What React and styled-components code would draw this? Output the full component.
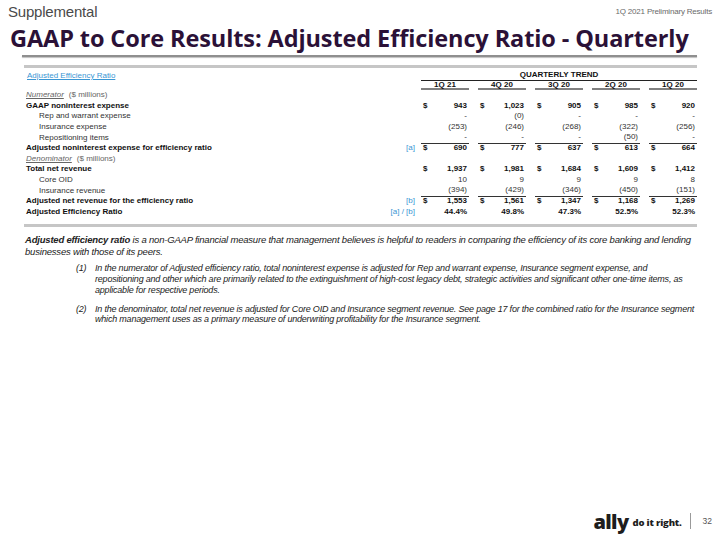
import React from 'react';
import styled, { createGlobalStyle } from 'styled-components';

const GlobalStyle = createGlobalStyle`
  html, body {
    margin: 0;
    padding: 0;
    background: #fff;
  }
  body {
    font-family: "Liberation Sans", Arial, sans-serif;
    color: #1a1a1a;
  }
`;

const Page = styled.div`
  width: 720px;
  height: 540px;
  display: flex;
  flex-direction: column;
  overflow: hidden;
`;

const TopBar = styled.div`
  height: 22px;
  padding: 0 8px;
  display: flex;
  align-items: center;
  justify-content: space-between;
`;

const Section = styled.div`
  font-size: 15px;
  color: #4a4a4a;
  letter-spacing: -0.2px;
`;

const Deck = styled.div`
  font-size: 8px;
  color: #6a6a6a;
  letter-spacing: -0.2px;
`;

const Title = styled.h1`
  margin: 0 0 0 10px;
  height: 32px;
  line-height: 32px;
  font-family: "Open Sans", Lato, sans-serif;
  font-weight: 700;
  font-size: 23.5px;
  color: #2b1137;
  letter-spacing: -0.1px;
  white-space: nowrap;
`;

const TitleRule = styled.div`
  height: 2px;
  margin: 1px 23px 0 22px;
  background: #8f8f8f;
  box-shadow: 0 1px 1px rgba(0, 0, 0, 0.25);
`;

const Table = styled.div`
  margin: 8px 23px 0 24px;
  border-top: 3px solid #c6c6c6;
  border-bottom: 3px solid #c6c6c6;
  padding-bottom: 7px;
  font-size: 8px;
`;

const Row = styled.div`
  display: grid;
  grid-template-columns: 1fr 30px repeat(5, 57px);
  align-items: center;
  height: ${(p) => p.$h || '10.6px'};
  line-height: ${(p) => p.$h || '10.6px'};
  font-weight: ${(p) => (p.$bold ? 700 : 400)};
  color: ${(p) => (p.$bold ? '#111' : '#333')};
`;

const HeadRow = styled(Row)`
  height: 13px;
  padding-top: 2px;
  box-sizing: border-box;
  line-height: 11px;
`;

const Link = styled.span`
  color: #3a96d4;
  text-decoration: underline;
  padding-left: 1px;
`;

const Trend = styled.div`
  grid-column: 3 / 8;
  margin-left: 9px;
  text-align: center;
  font-weight: 700;
  color: #111;
  border-bottom: 1px solid #222;
  line-height: 10px;
`;

const ColHead = styled.div`
  margin-left: 9px;
  height: 9px;
  line-height: 7px;
  box-sizing: border-box;
  text-align: center;
  font-weight: 700;
  color: #111;
  border-bottom: 2px solid #808080;
`;

const Label = styled.div`
  padding-left: ${(p) => (p.$indent ? '15px' : '2px')};
  white-space: nowrap;
`;

const SectionName = styled.span`
  font-style: italic;
  text-decoration: underline;
  color: #666;
`;

const Units = styled.span`
  margin-left: 5px;
  color: #666;
`;

const Marker = styled.div`
  text-align: right;
  margin-right: -3px;
  color: #3a96d4;
  font-weight: 400;
  white-space: nowrap;
`;

const Cell = styled.div`
  margin-left: 9px;
  height: 100%;
  box-sizing: border-box;
  display: flex;
  justify-content: space-between;
  padding: 0 2px;
  border-bottom: ${(p) => (p.$rule ? '1px solid #333' : '0')};
`;

const Para = styled.p`
  margin: 7px 0 0 25px;
  font-size: 9.5px;
  line-height: 12px;
  font-style: italic;
  color: #222;
  letter-spacing: -0.2px;
  white-space: nowrap;

  b {
    font-weight: 700;
  }
`;

const Notes = styled.div`
  margin-top: 5px;
  display: flex;
  flex-direction: column;
  gap: 8px;
`;

const Note = styled.div`
  display: flex;
  padding-left: 76px;
  font-size: 9px;
  line-height: 10.8px;
  font-style: italic;
  color: #222;
  letter-spacing: -0.2px;
  white-space: nowrap;
`;

const NoteNum = styled.span`
  width: 19px;
  flex: none;
`;

const Footer = styled.div`
  margin-top: auto;
  height: 26px;
  padding: 0 8px 6px 0;
  display: flex;
  align-items: center;
  justify-content: flex-end;
`;

const Logo = styled.span`
  font-family: "Open Sans", Lato, sans-serif;
  font-weight: 800;
  font-size: 20px;
  letter-spacing: -0.6px;
  color: #1d1d1d;
`;

const Tagline = styled.span`
  margin-left: 4px;
  font-family: "Open Sans", Lato, sans-serif;
  font-weight: 800;
  font-size: 9.5px;
  letter-spacing: -0.2px;
  color: #1d1d1d;
  padding-top: 3px;
`;

const Divider = styled.span`
  width: 1px;
  height: 16px;
  background: #9a9a9a;
  margin: 0 12px 0 8px;
`;

const PageNum = styled.span`
  font-size: 8.5px;
  color: #555;
`;

const quarters = ['1Q 21', '4Q 20', '3Q 20', '2Q 20', '1Q 20'];

const rows = [
  { section: 'Numerator' },
  {
    label: 'GAAP noninterest expense',
    bold: true,
    dollar: true,
    values: ['943', '1,023', '905', '985', '920'],
  },
  { label: 'Rep and warrant expense', indent: true, values: ['-', '(0)', '-', '-', '-'] },
  {
    label: 'Insurance expense',
    indent: true,
    values: ['(253)', '(246)', '(268)', '(322)', '(256)'],
  },
  {
    label: 'Repositioning items',
    indent: true,
    rule: true,
    values: ['-', '-', '-', '(50)', '-'],
  },
  {
    label: 'Adjusted noninterest expense for efficiency ratio',
    bold: true,
    dollar: true,
    marker: '[a]',
    values: ['690', '777', '637', '613', '664'],
  },
  { section: 'Denominator' },
  {
    label: 'Total net revenue',
    bold: true,
    dollar: true,
    values: ['1,937', '1,981', '1,684', '1,609', '1,412'],
  },
  { label: 'Core OID', indent: true, values: ['10', '9', '9', '9', '8'] },
  {
    label: 'Insurance revenue',
    indent: true,
    rule: true,
    values: ['(394)', '(429)', '(346)', '(450)', '(151)'],
  },
  {
    label: 'Adjusted net revenue for the efficiency ratio',
    bold: true,
    dollar: true,
    marker: '[b]',
    values: ['1,553', '1,561', '1,347', '1,168', '1,269'],
  },
  {
    label: 'Adjusted Efficiency Ratio',
    bold: true,
    marker: '[a] / [b]',
    values: ['44.4%', '49.8%', '47.3%', '52.5%', '52.3%'],
  },
];

function DataRow({ row }) {
  if (row.section) {
    return (
      <Row>
        <Label>
          <SectionName>{row.section}</SectionName>
          <Units>($ millions)</Units>
        </Label>
      </Row>
    );
  }

  return (
    <Row $bold={row.bold}>
      <Label $indent={row.indent}>{row.label}</Label>
      <Marker>{row.marker}</Marker>
      {row.values.map((v, i) => (
        <Cell key={quarters[i]} $rule={row.rule}>
          <span>{row.dollar ? '$' : ''}</span>
          <span>{v}</span>
        </Cell>
      ))}
    </Row>
  );
}

export default function App() {
  return (
    <>
      <GlobalStyle />
      <Page>
        <TopBar>
          <Section>Supplemental</Section>
          <Deck>1Q 2021 Preliminary Results</Deck>
        </TopBar>
        <Title>GAAP to Core Results: Adjusted Efficiency Ratio - Quarterly</Title>
        <TitleRule />

        <Table>
          <HeadRow>
            <Label>
              <Link>Adjusted Efficiency Ratio</Link>
            </Label>
            <Trend>QUARTERLY TREND</Trend>
          </HeadRow>
          <Row $h="9px">
            <div />
            <div />
            {quarters.map((q) => (
              <ColHead key={q}>{q}</ColHead>
            ))}
          </Row>
          {rows.map((row, i) => (
            <DataRow key={i} row={row} />
          ))}
        </Table>

        <Para>
          <b>Adjusted efficiency ratio</b> is a non-GAAP financial measure that management
          believes is helpful to readers in comparing the efficiency of its core banking and
          lending
          <br />
          businesses with those of its peers.
        </Para>

        <Notes>
          <Note>
            <NoteNum>(1)</NoteNum>
            <span>
              In the numerator of Adjusted efficiency ratio, total noninterest expense is adjusted
              for Rep and warrant expense, Insurance segment expense, and
              <br />
              repositioning and other which are primarily related to the extinguishment of
              high-cost legacy debt, strategic activities and significant other one-time items, as
              <br />
              applicable for respective periods.
            </span>
          </Note>
          <Note>
            <NoteNum>(2)</NoteNum>
            <span>
              In the denominator, total net revenue is adjusted for Core OID and Insurance segment
              revenue. See page 17 for the combined ratio for the Insurance segment
              <br />
              which management uses as a primary measure of underwriting profitability for the
              Insurance segment.
            </span>
          </Note>
        </Notes>

        <Footer>
          <Logo>ally</Logo>
          <Tagline>do it right.</Tagline>
          <Divider />
          <PageNum>32</PageNum>
        </Footer>
      </Page>
    </>
  );
}
